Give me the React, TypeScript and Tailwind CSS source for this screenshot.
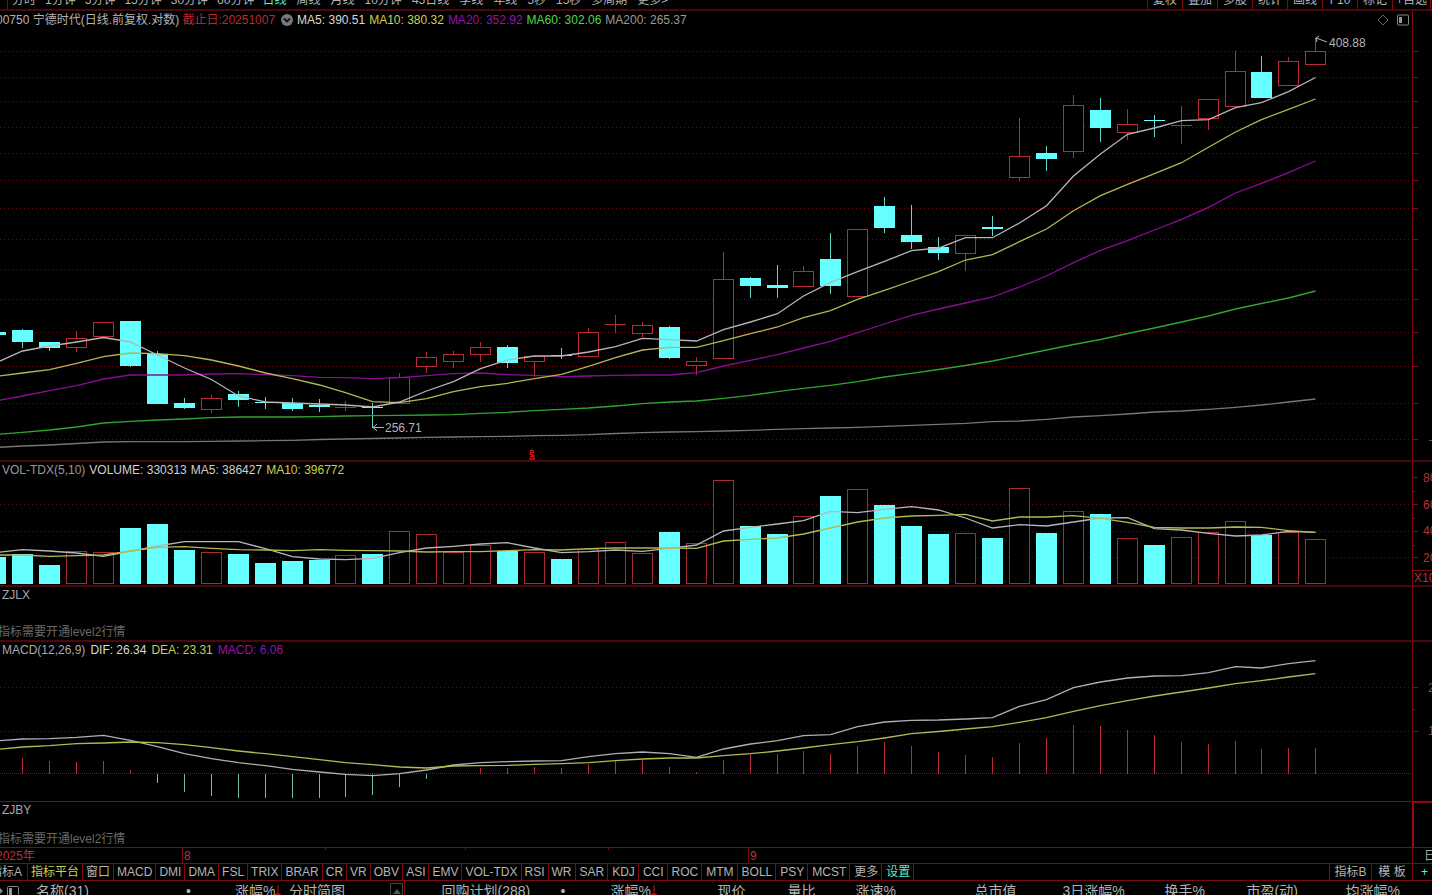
import React from 'react'

type Kind = 'up' | 'down'

interface Candle {
  kind: Kind
  top: number
  bottom: number
  high: number
  low: number
}

// The first bar sits left of the plot edge, so index 0 is half visible
const PLOT_WIDTH = 1412
const STEP = 26.94
const barX = (i: number) => Math.round(22.2 + STEP * (i - 1))

const c = (kind: Kind, top: number, bottom: number, high: number, low: number): Candle => ({
  kind, top, bottom, high, low,
})

const candles: Candle[] = [
  c('down', 332, 335, 332, 335),
  c('down', 330, 342, 329, 348),
  c('down', 342, 348, 342, 351),
  c('up', 338, 348, 331, 352),
  c('up', 322, 337, 322, 337),
  c('down', 321, 366, 321, 367),
  c('down', 354, 404, 351, 404),
  c('down', 403, 408, 398, 409),
  c('up', 398, 410, 395, 413),
  c('down', 394, 400, 391, 407),
  c('down', 402, 403, 397, 409),
  c('down', 403, 409, 398, 411),
  c('down', 405, 407, 399, 412),
  c('up', 407, 407, 401, 411),
  c('down', 407, 408, 403, 428),
  c('up', 377, 404, 373, 404),
  c('up', 357, 367, 352, 373),
  c('up', 354, 362, 351, 368),
  c('up', 347, 355, 342, 362),
  c('down', 347, 363, 345, 368),
  c('up', 356, 362, 355, 377),
  c('down', 355, 356, 348, 359),
  c('up', 332, 357, 328, 357),
  c('up', 324, 324, 315, 333),
  c('up', 325, 334, 322, 337),
  c('down', 327, 358, 326, 359),
  c('up', 361, 366, 357, 375),
  c('up', 279, 359, 252, 359),
  c('down', 278, 286, 277, 298),
  c('down', 285, 288, 265, 298),
  c('up', 271, 287, 266, 287),
  c('down', 259, 286, 233, 294),
  c('up', 229, 297, 229, 297),
  c('down', 206, 228, 197, 233),
  c('down', 235, 242, 205, 249),
  c('down', 247, 253, 237, 260),
  c('up', 235, 254, 235, 271),
  c('down', 227, 229, 216, 236),
  c('up', 156, 178, 118, 181),
  c('down', 153, 159, 146, 171),
  c('up', 105, 152, 95, 158),
  c('down', 110, 128, 98, 142),
  c('up', 124, 133, 109, 140),
  c('down', 120, 121, 115, 137),
  c('up', 125, 125, 106, 144),
  c('up', 99, 119, 99, 130),
  c('up', 71, 107, 51, 107),
  c('down', 72, 98, 56, 98),
  c('up', 61, 86, 57, 86),
  c('up', 51, 65, 38, 65),
]

const ma5 = [363, 351, 346, 342, 337.5, 342, 355, 368, 379.5, 396, 402, 403, 404, 405, 407, 402, 391, 381.7, 368.7, 360, 356, 356, 352, 346.7, 338.3, 339.7, 341, 329.7, 322, 313.7, 296, 282.3, 271.7, 261.3, 250.7, 248, 237.7, 237.7, 223, 205.7, 176, 154, 134.3, 128, 120.7, 119.7, 107.7, 102.7, 91.7, 77.5]
const ma10 = [376.5, 373, 369.7, 363.3, 356.7, 353, 353.7, 355.7, 360, 366, 373, 378.7, 385, 392.7, 401.7, 402.7, 398.7, 391.7, 386.7, 383.3, 378.7, 374.3, 366.3, 357.7, 350, 347.3, 347.3, 340.7, 333.7, 327, 317.7, 310.7, 299.3, 290.3, 281, 271.7, 260, 254.7, 241.7, 229, 210.7, 195.7, 184.3, 173.7, 162.7, 147.3, 132, 119.7, 109.3, 99]
const ma20 = [401, 396, 390.7, 385.7, 379, 375, 375, 375, 374, 373.7, 374.7, 375.7, 377.3, 377.7, 378.7, 377.7, 375.7, 373.7, 373, 374.7, 375.3, 376.7, 376, 375.3, 375, 375, 372.7, 366, 360.3, 354.7, 348, 341.3, 332.7, 324, 315.3, 309, 303, 297, 287, 276, 262.7, 250.3, 240.7, 230, 219.3, 207.3, 193, 183.3, 172.7, 161]
const ma60 = [434.5, 432.3, 430, 427, 423, 421.3, 420, 419, 417.7, 417, 417, 417, 416.7, 416, 415.7, 415.3, 415, 414.7, 413.3, 412.3, 410.7, 409.3, 408, 406, 403.7, 402, 401, 398.3, 395.3, 391.7, 388.3, 385.3, 381.7, 377, 373.3, 369.5, 365.5, 361, 355.5, 350, 344.5, 339.5, 333.5, 328, 322, 316, 309, 303.5, 298, 291]
const ma200 = [447.5, 446, 445, 443.5, 442, 441.7, 441.7, 441.7, 441.3, 441, 440.7, 440.3, 439.5, 439, 438.5, 438, 437.3, 437, 436.7, 436.3, 435.7, 435.3, 434.7, 433.5, 432.7, 432, 431.7, 431, 430.3, 429.3, 428.7, 428, 427.3, 426.3, 425.3, 424.3, 423.3, 421.7, 421, 419.3, 417, 415.7, 414, 412, 411, 409.3, 407.3, 405, 402, 399]

const volumeTops = [557, 554, 565, 551, 552, 528, 524, 550, 552, 554, 563, 561, 560, 555, 554, 531, 534, 552, 545, 551, 552, 559, 549, 542, 553, 532, 543, 480, 526, 534, 516, 496, 489, 505, 526, 534, 533, 538, 488, 533, 511, 514, 538, 545, 537, 532, 521, 535, 532, 539]
const volMa5 = [552.5, 549.7, 551, 553, 556.3, 551.3, 546, 541.7, 541.7, 541.7, 548.7, 556.7, 559, 559.7, 558.3, 552.7, 548, 546.3, 544, 542.7, 548, 552.7, 551.7, 550, 551.3, 548.3, 545, 531, 527.3, 524, 520.7, 511.3, 512.7, 509.3, 506.7, 510, 518, 528, 524.7, 526, 522, 518, 517.7, 528.7, 530, 533.3, 536, 535, 531.3, 532.3]
const volMa10 = [555, 555, 556.3, 555.7, 555, 551, 547.3, 546.7, 548.3, 549.7, 550, 550.7, 549.7, 550.3, 550.7, 551, 552, 551.7, 551.7, 550.7, 549.7, 550, 548.7, 548, 548, 548, 548.3, 541, 539.3, 538, 534, 528, 522, 518, 516, 515.3, 514.3, 521, 517, 517, 515.7, 518.3, 522.3, 527.3, 528, 528, 527, 527.3, 530.7, 532.3]

const MACD_ZERO = 774
const macdEnds = [758, 758, 761, 762, 761, 770, 783, 792, 796, 798, 798, 798, 798, 797, 795, 787, 779, 774, 768, 768, 767, 768, 764, 761, 760, 767, 772, 760, 754, 754, 751, 754, 746, 742, 746, 752, 755, 757, 743, 738, 725, 726, 730, 735, 742, 744, 741, 749, 748, 748]
const dif = [741, 739, 738.7, 737.3, 735.3, 740.3, 746.7, 753.7, 758.7, 762.7, 765.7, 769.3, 772, 774.3, 775.7, 773.7, 770, 765, 762.7, 761.7, 761, 760.7, 756.7, 753.7, 752, 753.7, 757.3, 749, 744, 740.7, 735.7, 734.7, 726.7, 722, 720.3, 720, 719, 717.7, 706.3, 699.7, 687.7, 682, 678, 676, 675.7, 672.7, 666.7, 668, 663.7, 660.7]
const dea = [749.5, 747, 745.7, 743.7, 743, 742, 742.7, 744.7, 747.7, 751, 753.7, 756.7, 759.7, 762.7, 764.7, 767, 768, 766, 765.7, 765.3, 764.3, 763.7, 762.7, 760.7, 759, 758, 758, 755.7, 753.7, 751, 748, 744.7, 741.7, 738, 733.7, 731.5, 729, 726.7, 722.3, 717.7, 711.3, 705.7, 700.7, 696, 692, 688, 683.7, 680.7, 677, 673.7]

const priceGrid = [51, 77, 101, 127, 153, 180, 208, 239, 269, 299, 332, 366, 403, 439]
const volumeGrid = [504, 531, 557]
const macdGrid = [687, 731]

const leftPeriods = ['分时', '1分钟', '5分钟', '15分钟', '30分钟', '60分钟']
const rightPeriods = ['日线', '周线', '月线', '10分钟', '45日线', '季线', '年线', '5秒', '15秒', '多周期', '更多>']
const tools = ['复权', '叠加', '多股', '统计', '画线', 'F10', '标记', '+自选']
const indicators = ['指标平台', '窗口', 'MACD', 'DMI', 'DMA', 'FSL', 'TRIX', 'BRAR', 'CR', 'VR', 'OBV', 'ASI', 'EMV', 'VOL-TDX', 'RSI', 'WR']
const moreIndicators = ['SAR', 'KDJ', 'CCI', 'ROC', 'MTM', 'BOLL', 'PSY', 'MCST', '更多', '设置']

const pct = (x: number) => `${(x / PLOT_WIDTH) * 100}%`

function MaLine({ values, color }: { values: number[]; color: string }) {
  return (
    <polyline
      points={values.map((y, i) => `${barX(i) + 0.5},${y}`).join(' ')}
      fill="none"
      stroke={color}
      strokeWidth="1.3"
      vectorEffect="non-scaling-stroke"
    />
  )
}

function GridLines({ rows }: { rows: number[] }) {
  return (
    <g stroke="#6a060c" strokeDasharray="1 3" shapeRendering="crispEdges">
      {rows.map((y) => (
        <line key={y} x1="0" x2={PLOT_WIDTH} y1={y + 0.5} y2={y + 0.5} />
      ))}
    </g>
  )
}

function Axis({ top, height, major, minor = [], labels = [], children }: {
  top: number
  height: number
  major: number[]
  minor?: number[]
  labels?: { y: number; x: number; text: string }[]
  children?: React.ReactNode
}) {
  return (
    <svg viewBox={`0 ${top} 19 ${height}`} preserveAspectRatio="none" className="block w-full h-full">
      <g stroke="#8a0a14" shapeRendering="crispEdges">
        {major.map((y) => <line key={y} x1="0" x2="5" y1={y + 0.5} y2={y + 0.5} />)}
        {minor.map((y) => <line key={y} x1="0" x2="2" y1={y + 0.5} y2={y + 0.5} />)}
      </g>
      {labels.map((l) => (
        <text key={l.text} x={l.x} y={l.y} fill="#b0343a" fontSize="12">{l.text}</text>
      ))}
      {children}
    </svg>
  )
}

function PriceChart() {
  return (
    <svg viewBox={`0 29 ${PLOT_WIDTH} 431`} preserveAspectRatio="none" className="absolute inset-0 w-full h-full">
      <GridLines rows={priceGrid} />
      <g shapeRendering="crispEdges">
        {candles.map((k, i) => {
          const x = barX(i)
          if (k.kind === 'down') {
            return (
              <g key={i} fill="#66ffff">
                <rect x={x} y={k.high} width="1" height={k.low - k.high} fill="#5fd8cc" />
                <rect x={x - 10} y={k.top} width="21" height={k.bottom - k.top} />
              </g>
            )
          }
          return (
            <g key={i} stroke="#b82c36" fill="#000">
              <line x1={x + 0.5} x2={x + 0.5} y1={k.high} y2={k.low} />
              {k.top === k.bottom ? (
                <line x1={x - 10} x2={x + 11} y1={k.top + 0.5} y2={k.top + 0.5} />
              ) : (
                <rect x={x - 9.5} y={k.top + 0.5} width="20" height={k.bottom - k.top - 1} />
              )}
            </g>
          )
        })}
      </g>
      <MaLine values={ma200} color="#777577" />
      <MaLine values={ma60} color="#2fa52f" />
      <MaLine values={ma20} color="#8a0d94" />
      <MaLine values={ma10} color="#b4b850" />
      <MaLine values={ma5} color="#b8b4b8" />
      {/* high / low pointers */}
      <g fill="none" stroke="#b8b8b8">
        <path d="M1327 42 L1316 38 M1319 36 L1316 38 L1317 42" />
        <path d="M384 427.5 H373 M377 424 L373 427.5 L377 431" />
      </g>
    </svg>
  )
}

function VolumeChart() {
  return (
    <svg viewBox={`0 478 ${PLOT_WIDTH} 107`} preserveAspectRatio="none" className="block w-full h-[107px]">
      <GridLines rows={volumeGrid} />
      <g shapeRendering="crispEdges">
        {volumeTops.map((y, i) => {
          const x = barX(i)
          return candles[i].kind === 'down' ? (
            <rect key={i} x={x - 10} y={y} width="21" height={584 - y} fill="#66ffff" />
          ) : (
            <rect key={i} x={x - 9.5} y={y + 0.5} width="20" height={583 - y} fill="#000" stroke="#a82a32" />
          )
        })}
      </g>
      <MaLine values={volMa5} color="#b8b4b8" />
      <MaLine values={volMa10} color="#b4b850" />
    </svg>
  )
}

function MacdChart() {
  return (
    <svg viewBox={`0 658 ${PLOT_WIDTH} 143`} preserveAspectRatio="none" className="block w-full h-[143px]">
      <GridLines rows={macdGrid} />
      <g shapeRendering="crispEdges">
        <line x1="0" x2={PLOT_WIDTH} y1="773.5" y2="773.5" stroke="#8a0a14" strokeDasharray="1 1" />
        {macdEnds.map((y, i) => i > 0 && (
          <line
            key={i}
            x1={barX(i) + 0.5}
            x2={barX(i) + 0.5}
            y1={MACD_ZERO}
            y2={y}
            stroke={y > MACD_ZERO ? '#6fb8aa' : '#b82c36'}
          />
        ))}
      </g>
      <MaLine values={dif} color="#b0aeb0" />
      <MaLine values={dea} color="#b4b850" />
    </svg>
  )
}

function LockedPanel({ name }: { name: string }) {
  return (
    <div className="flex-1 min-w-0 flex flex-col justify-between overflow-hidden">
      <h2 className="pl-0.5 text-[#a8a8a8]">{name}</h2>
      <p className="-ml-0.5 text-[#686868] whitespace-nowrap">指标需要开通level2行情</p>
    </div>
  )
}

function SortArrow() {
  return (
    <svg viewBox="0 0 6 14" className="inline-block w-1.5 h-3.5 align-middle">
      <path d="M3 0 V12 M0.5 9 L3 13 L5.5 9 Z" stroke="#c0141c" fill="#c0141c" />
    </svg>
  )
}

export default function App() {
  return (
    <div className="h-screen flex flex-col overflow-hidden bg-black text-[12px] leading-4 text-[#b4b4b4] font-['Liberation_Sans','Noto_Sans_CJK_SC',sans-serif]">
      {/* Period bar */}
      <nav className="h-[11px] shrink-0 flex justify-between border-b-2 border-[#4c070c] overflow-hidden">
        <div className="flex items-end ml-[7px] pl-1 border-l border-[#7d0a12] leading-[18px] whitespace-nowrap">
          <div className="flex gap-[9px] mr-2">
            {leftPeriods.map((p) => <button key={p} type="button">{p}</button>)}
          </div>
          <div className="flex gap-[10px]">
            {rightPeriods.map((p) => (
              <button key={p} type="button" className={p === '日线' ? 'text-[#5fe8d4]' : ''}>{p}</button>
            ))}
          </div>
        </div>
        <div className="flex items-end leading-[18px] whitespace-nowrap border-r border-[#7d0a12] mr-px">
          {tools.map((t) => (
            <button key={t} type="button" className="w-[35px] border-l border-[#7d0a12] text-center last:w-[38px]">{t}</button>
          ))}
        </div>
      </nav>

      {/* Price */}
      <section className="flex-1 min-h-0 flex border-b-2 border-[#4c070c]">
        <div className="flex-1 min-w-0 flex flex-col">
          <header className="h-[18px] shrink-0 flex items-center whitespace-nowrap">
            <h1 className="-ml-1">00750 宁德时代(日线.前复权.对数)</h1>
            <span className="ml-[3px] text-[#bb2a32]">截止日:20251007</span>
            <button type="button" aria-label="展开" className="ml-1.5 mr-1">
              <svg viewBox="0 0 12 12" className="block w-3 h-3">
                <circle cx="6" cy="6" r="6" fill="#777" />
                <path d="M3 4.5 L6 7.5 L9 4.5" fill="none" stroke="#111" strokeWidth="1.8" />
              </svg>
            </button>
            <div className="flex gap-1">
              <span className="text-[#d8d8d8]">MA5: 390.51</span>
              <span className="text-[#c8d050]">MA10: 380.32</span>
              <span className="text-[#9c10a6]">MA20: 352.92</span>
              <span className="text-[#4cd84c]">MA60: 302.06</span>
              <span className="text-[#989898]">MA200: 265.37</span>
            </div>
            <div className="ml-auto mr-[3px] flex items-center gap-2">
              <button type="button" aria-label="标记">
                <svg viewBox="0 0 12 12" className="block w-3 h-3">
                  <path d="M6 1 L11 6 L6 11 L1 6 Z" fill="none" stroke="#666" />
                </svg>
              </button>
              <button type="button" aria-label="侧栏">
                <svg viewBox="0 0 12 12" className="block w-3 h-3">
                  <rect x="0.5" y="1" width="11" height="10" rx="1" fill="none" stroke="#888" />
                  <rect x="2" y="3" width="3" height="6" fill="#999" />
                </svg>
              </button>
            </div>
          </header>
          <div className="relative flex-1 min-h-0">
            <PriceChart />
            <span className="absolute top-[6px]" style={{ left: pct(1329) }}>408.88</span>
            <span className="absolute bottom-[24px]" style={{ left: pct(385) }}>256.71</span>
            <svg viewBox="0 0 8 11" className="absolute bottom-0 w-2 h-[11px]" style={{ left: pct(528) }}>
              <path d="M2 2.5 L4 0.8 L6 2.5 M6 3.5 H2.5 L2 5 L5.8 6.6 L2 8 M1 10 H6.5 L5.8 7" fill="none" stroke="#d00c18" strokeWidth="1.4" />
            </svg>
          </div>
        </div>
        <div className="w-5 shrink-0 border-l border-[#7d0a12] pt-[18px]">
          <Axis top={29} height={431} major={priceGrid}>
            <line x1="16" x2="19" y1="440.5" y2="440.5" stroke="#b0343a" />
          </Axis>
        </div>
      </section>

      {/* Volume */}
      <section className="shrink-0 flex border-b-2 border-[#4c070c]">
        <div className="flex-1 min-w-0">
          <header className="pl-0.5 flex gap-1 whitespace-nowrap">
            <h2 className="text-[#989898]">VOL-TDX(5,10)</h2>
            <span className="text-[#d0d0d0]">VOLUME: 330313</span>
            <span className="text-[#d0d0d0]">MA5: 386427</span>
            <span className="text-[#c8d050]">MA10: 396772</span>
          </header>
          <VolumeChart />
        </div>
        <div className="w-5 shrink-0 border-l border-[#7d0a12] h-[123px]">
          <Axis
            top={462}
            height={123}
            major={[477, 504, 531, 557]}
            minor={[491, 518, 545]}
            labels={[
              { x: 10, y: 482, text: '80' },
              { x: 10, y: 509, text: '60' },
              { x: 10, y: 535, text: '40' },
              { x: 10, y: 562, text: '20' },
              { x: 1, y: 582, text: 'X10' },
            ]}
          >
            <line x1="0" x2="19" y1="570.5" y2="570.5" stroke="#7d0a12" />
          </Axis>
        </div>
      </section>

      <section className="h-[55px] shrink-0 flex border-b-2 border-[#4c070c]">
        <LockedPanel name="ZJLX" />
        <div className="w-5 shrink-0 border-l border-[#7d0a12]" />
      </section>

      {/* MACD */}
      <section className="shrink-0 flex border-b border-[#7d0a12]">
        <div className="flex-1 min-w-0">
          <header className="pl-0.5 flex gap-[5px] whitespace-nowrap">
            <h2 className="text-[#a8a8a8]">MACD(12,26,9)</h2>
            <span className="text-[#d8d8d8]">DIF: 26.34</span>
            <span className="text-[#c8d050]">DEA: 23.31</span>
            <span className="text-[#9c10a6]">MACD: 6.06</span>
          </header>
          <MacdChart />
        </div>
        <div className="w-5 shrink-0 border-l border-[#7d0a12] h-[159px]">
          <Axis
            top={642}
            height={159}
            major={macdGrid}
            minor={[709]}
            labels={[
              { x: 15, y: 692, text: '20' },
              { x: 15, y: 735, text: '10' },
            ]}
          />
        </div>
      </section>

      <section className="h-[46px] shrink-0 flex border-b border-[#7d0a12]">
        <LockedPanel name="ZJBY" />
        <div className="w-5 shrink-0 border-l-2 border-t border-[#980914]" />
      </section>

      {/* Dates */}
      <div className="h-4 shrink-0 flex border-b border-[#7d0a12] text-[#b8323a]">
        <div className="relative flex-1 min-w-0">
          <span className="-ml-1">2025年</span>
          <span className="absolute top-0 h-full pl-px border-l border-[#7d0a12]" style={{ left: pct(182) }}>8</span>
          <span className="absolute top-0 h-full pl-px border-l border-[#7d0a12]" style={{ left: pct(748) }}>9</span>
          {[325, 465, 608].map((x) => (
            <span key={x} className="absolute top-0 w-px h-0.5 bg-[#7d0a12]" style={{ left: pct(x) }} />
          ))}
        </div>
        <div className="w-5 shrink-0 pl-[11px] border-l border-[#7d0a12] text-[#a8a8a8] overflow-hidden whitespace-nowrap">日线</div>
      </div>

      {/* Indicator tabs */}
      <nav className="h-[17px] shrink-0 flex border-b border-[#7d0a12] whitespace-nowrap">
        <div className="flex-1 min-w-0 flex overflow-hidden">
          <button type="button" className="-ml-[10px] pr-[5px] shrink-0 border-r border-[#7d0a12]">指标A</button>
          {indicators.map((name) => (
            <button
              key={name}
              type="button"
              className={`px-[3px] shrink-0 border-r border-[#7d0a12] ${name === '指标平台' ? 'text-[#c8d050]' : ''}`}
            >
              {name}
            </button>
          ))}
          {moreIndicators.map((name) => (
            <button
              key={name}
              type="button"
              className={`pl-1 pr-[3px] shrink-0 border-r border-[#7d0a12] ${name === '设置' ? 'text-[#5fe8d4]' : ''}`}
            >
              {name}
            </button>
          ))}
          <div className="ml-auto flex">
            <button type="button" className="w-[42px] border-l border-[#7d0a12]">指标B</button>
            <button type="button" className="w-[41px] border-l border-[#7d0a12]">模 板</button>
          </div>
        </div>
        <button type="button" aria-label="添加" className="w-5 shrink-0 pl-1 border-l border-[#7d0a12] text-[#5fe8d4]">+</button>
      </nav>

      {/* Quote list headers */}
      <div className="h-[14px] shrink-0 flex overflow-hidden text-[14px] leading-5 whitespace-nowrap">
        <table className="w-[390px] shrink-0 table-fixed text-left">
          <thead>
            <tr className="[&>th]:font-normal [&>th]:p-0">
              <th className="w-9" aria-label="列表">
                <svg viewBox="0 0 20 14" className="block w-5 h-3.5">
                  <path d="M-3 7 L0 4 L3 7 L0 10 Z" fill="#888" />
                  <rect x="7.5" y="2.5" width="11" height="11" rx="1" fill="none" stroke="#888" />
                  <rect x="9" y="4" width="3" height="9" fill="#999" />
                </svg>
              </th>
              <th className="w-[199px]"><span className="inline-block w-[150px]">名称(31)</span>•</th>
              <th className="w-[54px]">涨幅%<SortArrow /></th>
              <th>分时简图</th>
            </tr>
          </thead>
        </table>
        <button type="button" aria-label="向上滚动" className="w-[13px] h-4 mt-0.5 shrink-0 flex items-center justify-center border border-[#444]">
          <svg viewBox="0 0 8 5" className="w-2 h-[5px]"><path d="M0 5 L4 0 L8 5 Z" fill="#555" /></svg>
        </button>
        <table className="flex-1 table-fixed text-left ml-px border-l border-[#7d0a12]">
          <thead>
            <tr className="[&>th]:font-normal [&>th]:p-0">
              <th className="w-[37px]" aria-hidden="true" />
              <th className="w-[169px]"><span className="inline-block w-[119px]">回购计划(288)</span>•</th>
              <th className="w-[107px]">涨幅%<SortArrow /></th>
              <th className="w-[70px]">现价</th>
              <th className="w-[68px]">量比</th>
              <th className="w-[119px]">涨速%</th>
              <th className="w-[88px]">总市值</th>
              <th className="w-[102px]">3日涨幅%</th>
              <th className="w-[82px]">换手%</th>
              <th className="w-[99px]">市盈(动)</th>
              <th>均涨幅%</th>
            </tr>
          </thead>
        </table>
      </div>
    </div>
  )
}
